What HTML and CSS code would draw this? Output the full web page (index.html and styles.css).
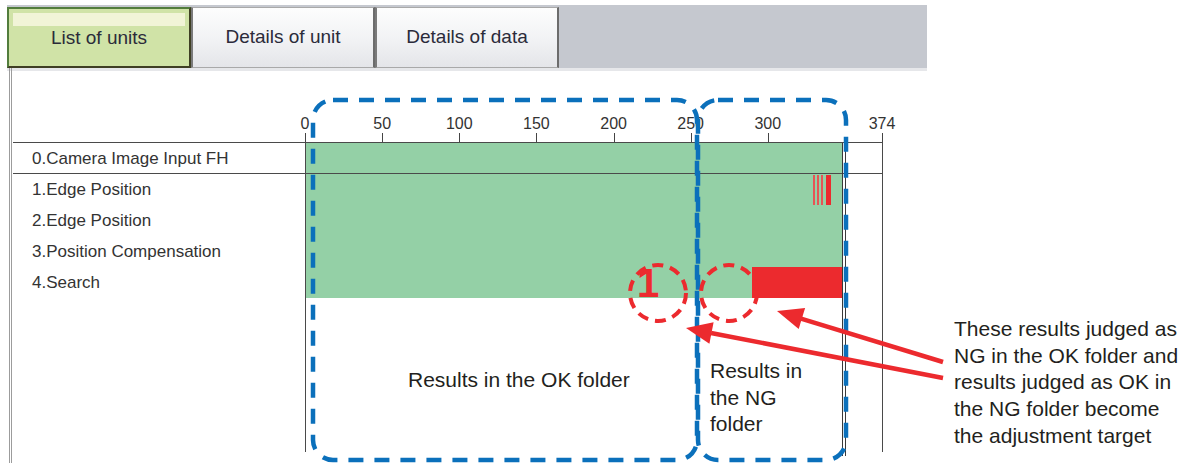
FILE: index.html
```html
<!DOCTYPE html>
<html lang="en">

<head>
  <meta charset="UTF-8">
  <meta name="viewport" content="width=device-width, initial-scale=1.0">
  <title>List of units</title>
  <link rel="stylesheet" href="styles.css">
</head>

<body>
  <div class="page">
    <div class="tabs">
      <div class="tab active">List of units</div>
      <div class="tab">Details of unit</div>
      <div class="tab">Details of data</div>
    </div>

    <div class="panel">
      <div class="ruler-row">
        <div class="ruler">
          <div class="tick" style="left:0%"><span>0</span></div>
          <div class="tick" style="left:13.37%"><span>50</span></div>
          <div class="tick" style="left:26.74%"><span>100</span></div>
          <div class="tick" style="left:40.11%"><span>150</span></div>
          <div class="tick" style="left:53.48%"><span>200</span></div>
          <div class="tick" style="left:66.84%"><span>250</span></div>
          <div class="tick" style="left:80.21%"><span>300</span></div>
          <div class="tick" style="left:100%"><span>374</span></div>
        </div>
      </div>

      <div class="chart">
        <div class="labels">
          <div class="label first">0.Camera Image Input FH</div>
          <div class="label">1.Edge Position</div>
          <div class="label">2.Edge Position</div>
          <div class="label">3.Position Compensation</div>
          <div class="label">4.Search</div>
        </div>
        <div class="plot">
          <div class="track first">
            <div class="bar" style="width:93.05%"></div>
          </div>
          <div class="track">
            <div class="bar" style="width:93.05%"></div>
            <div class="ng thin" style="left:88.02%"></div>
            <div class="ng thin" style="left:88.72%"></div>
            <div class="ng thin" style="left:89.41%"></div>
            <div class="ng wide" style="left:90.28%"></div>
          </div>
          <div class="track">
            <div class="bar" style="width:93.05%"></div>
          </div>
          <div class="track">
            <div class="bar" style="width:93.05%"></div>
          </div>
          <div class="track">
            <div class="bar" style="width:93.05%"></div>
            <div class="ng" style="left:77.43%; width:15.62%"></div>
          </div>
          <div class="end-line" style="left:93.05%"></div>
        </div>
      </div>
    </div>

    <!-- annotations drawn over the screen -->
    <svg class="notes" width="1190" height="463" viewBox="0 0 1190 463">
      <defs>
        <clipPath id="row4">
          <rect x="600" y="250" width="100" height="48"></rect>
        </clipPath>
      </defs>
      <text class="mark-one" x="648" y="297" clip-path="url(#row4)">1</text>

      <rect class="box" x="313" y="100" width="384" height="360" rx="20"></rect>
      <rect class="box" x="698" y="100" width="148" height="360" rx="20"></rect>

      <circle class="ring" cx="658" cy="293" r="28"></circle>
      <circle class="ring" cx="729" cy="293" r="28"></circle>

      <line class="arrow" x1="943" y1="362" x2="801" y2="318.6"></line>
      <polygon class="head" points="777,311 798.7,329.1 805.1,308.1"></polygon>
      <line class="arrow" x1="943" y1="378" x2="711" y2="333"></line>
      <polygon class="head" points="686,328 709.4,343.8 713.6,322.2"></polygon>
    </svg>

    <div class="note note-ok">Results in the OK folder</div>
    <div class="note note-ng">Results in<br>the NG<br>folder</div>
    <div class="note note-callout">These results judged as<br>NG in the OK folder and<br>results judged as OK in<br>the NG folder become<br>the adjustment target</div>
  </div>
</body>

</html>
```

FILE: styles.css
```css
body {
  margin: 0;
  padding: 0;
  background-color: #fff;
  font-family: "Liberation Sans", Arial, sans-serif;
  color: #333;
}

.page {
  position: relative;
  width: 1190px;
  height: 463px;
  overflow: hidden;
}

/* tab strip */
.tabs {
  display: flex;
  margin: 5px 0 0 7px;
  padding-top: 2px;
  width: 920px;
  height: 61px;
  background-color: #c5c8cf;
  box-shadow: 0 3px 0 #e6e7ea;
}

.tab {
  position: relative;
  box-sizing: border-box;
  width: 184px;
  height: 61px;
  line-height: 58px;
  text-align: center;
  font-size: 19px;
  color: #2b2b3a;
  background: linear-gradient(#fdfdfd, #f1f2f4 55%, #e4e5e9);
  border: 1px solid #a9a9a9;
  border-right: 2px solid #6c6c6c;
  border-left: 2px solid #7a7a7a;
}

.tab.active {
  width: 184px;
  background: #d0e3a7;
  border: 2px solid #527d3c;
  border-right-color: #3f3f24;
  border-bottom-color: #3f3f24;
}

.tab.active::before {
  content: "";
  position: absolute;
  top: 4px;
  left: 4px;
  right: 4px;
  height: 13px;
  background-color: #f1f4d7;
}

/* work area */
.panel {
  margin-left: 9px;
  height: 395px;
  border-left: 3px double #9c9c9c;
}

.ruler-row {
  margin-left: 1px;
  height: 74px;
}

.ruler {
  position: relative;
  margin-left: 292px;
  width: 577px;
  height: 74px;
}

.tick {
  position: absolute;
  bottom: 0;
  width: 1px;
  height: 9px;
  background-color: #444;
}

.tick span {
  position: absolute;
  bottom: 10px;
  left: 0;
  transform: translateX(-50%);
  font-size: 16px;
  line-height: 16px;
  color: #333;
}

.chart {
  display: grid;
  grid-template-columns: 292px 578px;
  margin-left: 1px;
  width: 870px;
  border-top: 1px solid #4a4a4a;
}

.label {
  height: 31px;
  line-height: 31px;
  padding-left: 19px;
  font-size: 17px;
  color: #333;
  white-space: nowrap;
}

.label.first,
.track.first {
  height: 30px;
  border-bottom: 1px solid #4a4a4a;
}

.plot {
  position: relative;
  height: 309px;
  border-left: 1px solid #4a4a4a;
  border-right: 1px solid #4a4a4a;
}

.track {
  position: relative;
  height: 31px;
}

.bar {
  position: absolute;
  top: 0;
  bottom: 0;
  left: 0;
  background-color: #94d0a6;
}

.ng {
  position: absolute;
  top: 0;
  bottom: 0;
  background-color: #ec2a2e;
}

.ng.thin {
  top: 1px;
  width: 2px;
  background-color: #e65555;
}

.ng.wide {
  top: 1px;
  width: 5px;
}

.end-line {
  position: absolute;
  top: 0;
  bottom: -4px;
  width: 2px;
  border-left: 1px solid #3a3a3a;
  border-right: 1px solid #3a3a3a;
}

/* annotations */
.notes {
  position: absolute;
  top: 0;
  left: 0;
  pointer-events: none;
}

.box {
  fill: none;
  stroke: #0b70bb;
  stroke-width: 4.5;
  stroke-dasharray: 15 11;
}

.ring {
  fill: none;
  stroke: #ec2a2e;
  stroke-width: 4;
  stroke-dasharray: 11 7;
}

.arrow {
  stroke: #ec2a2e;
  stroke-width: 4.5;
}

.head {
  fill: #ec2a2e;
}

.mark-one {
  font-family: "Liberation Sans", Arial, sans-serif;
  font-size: 40px;
  font-weight: bold;
  fill: #ec2a2e;
  text-anchor: middle;
}

.note {
  position: absolute;
  font-size: 21px;
  line-height: 26.67px;
  color: #231f20;
  white-space: nowrap;
}

.note-ok {
  top: 367px;
  left: 408px;
}

.note-ng {
  top: 358px;
  left: 710px;
}

.note-callout {
  top: 316px;
  left: 954px;
}
```
